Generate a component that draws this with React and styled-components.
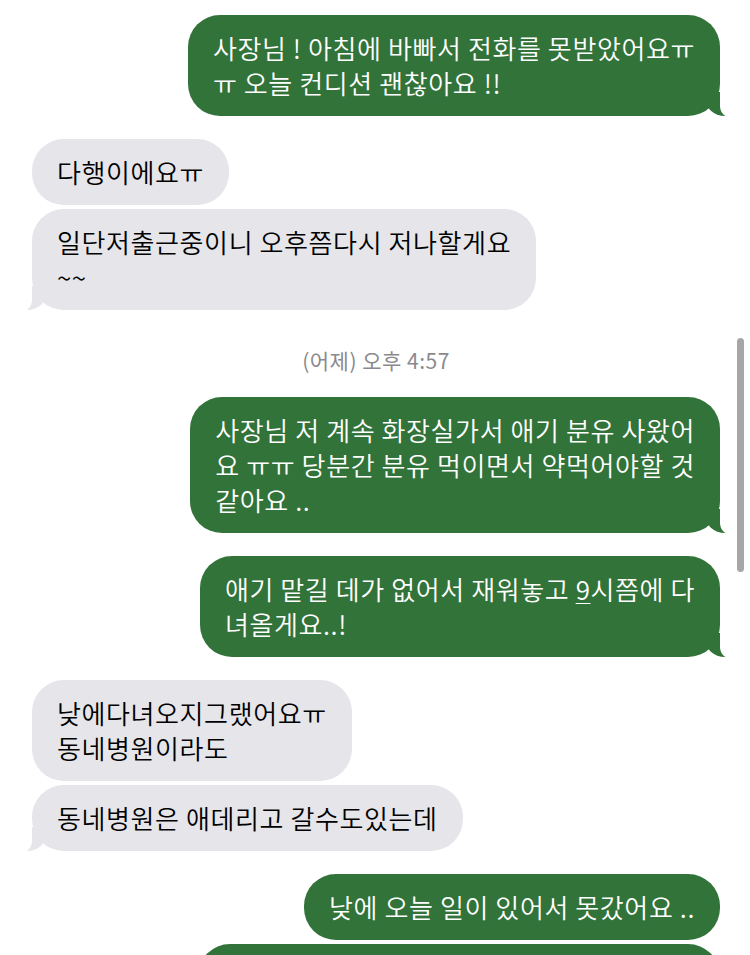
import React from "react";
import styled, { createGlobalStyle, css } from "styled-components";

const GlobalStyle = createGlobalStyle`
  html, body {
    margin: 0;
    padding: 0;
    background: #ffffff;
    height: 955px;
    overflow: hidden;
  }
  * { box-sizing: border-box; }
`;

const GREEN = "#32733a";
const GRAY = "#e5e5ea";

const ThreadUI = styled.div`
  width: 750px;
  height: 955px;
  overflow: hidden;
  display: flex;
  flex-direction: column;
  padding: 15px 30px 0 32px;
  font-family: "Noto Sans CJK KR", "Noto Sans", sans-serif;
  position: relative;
`;

const sentTail = css`
  &::before {
    content: "";
    position: absolute;
    bottom: 0;
    right: -9px;
    height: 24px;
    border-right: 24px solid ${GREEN};
    border-bottom-left-radius: 20px 18px;
  }
  &::after {
    content: "";
    position: absolute;
    bottom: -2px;
    right: -15px;
    width: 15px;
    height: 26px;
    background: #ffffff;
    border-bottom-left-radius: 12px;
  }
`;

const receivedTail = css`
  &::before {
    content: "";
    position: absolute;
    bottom: 0;
    left: -9px;
    height: 24px;
    border-left: 24px solid ${GRAY};
    border-bottom-right-radius: 20px 18px;
  }
  &::after {
    content: "";
    position: absolute;
    bottom: -2px;
    left: -15px;
    width: 15px;
    height: 26px;
    background: #ffffff;
    border-bottom-right-radius: 12px;
  }
`;

const BubbleUI = styled.div`
  position: relative;
  align-self: ${(p) => (p.$me ? "flex-end" : "flex-start")};
  margin-top: ${(p) => (p.$first ? "23px" : "4px")};
  ${(p) => (p.$w ? `width: ${p.$w}px;` : "")}
  padding: 15px 25px 16px;
  border-radius: 32px;
  background: ${(p) => (p.$me ? GREEN : GRAY)};
  color: ${(p) => (p.$me ? "#ffffff" : "#000000")};
  font-size: 26px;
  font-weight: 350;
  letter-spacing: 0.6px;
  line-height: 35px;
  white-space: nowrap;
  ${(p) => p.$tail && (p.$me ? sentTail : receivedTail)}
  &:first-child {
    margin-top: 0;
  }
`;

const LineUI = styled.div`
  position: relative;
  z-index: 1;
`;

const LinkNumUI = styled.span`
  text-decoration: underline;
  text-underline-offset: 3px;
  text-decoration-thickness: 1px;
`;

const StampUI = styled.div`
  align-self: center;
  margin: 37px 0 20px;
  font-size: 21px;
  letter-spacing: 0.5px;
  line-height: 26px;
  color: #8a8a8e;
`;

const ScrollBarUI = styled.div`
  position: absolute;
  right: 6px;
  top: 338px;
  width: 7px;
  height: 234px;
  border-radius: 4px;
  background: #a6a6a6;
`;

const Bubble = ({ me, first, tail, w, lines }) => (
  <BubbleUI $me={me} $first={first} $tail={tail} $w={w}>
    {lines.map((line, i) => (
      <LineUI key={i}>{line}</LineUI>
    ))}
  </BubbleUI>
);

export default function App() {
  return (
    <>
      <GlobalStyle />
      <ThreadUI>
        <Bubble
          me
          tail
          lines={["사장님 ! 아침에 바빠서 전화를 못받았어요ㅠ", "ㅠ 오늘 컨디션 괜찮아요 !!"]}
        />
        <Bubble first lines={["다행이에요ㅠ"]} />
        <Bubble tail lines={["일단저출근중이니 오후쯤다시 저나할게요", "~~"]} />

        <StampUI>(어제) 오후 4:57</StampUI>

        <Bubble
          me
          tail
          lines={[
            "사장님 저 계속 화장실가서 애기 분유 사왔어",
            "요 ㅠㅠ 당분간 분유 먹이면서 약먹어야할 것",
            "같아요 ..",
          ]}
        />
        <Bubble
          me
          first
          tail
          lines={[
            <>
              애기 맡길 데가 없어서 재워놓고 <LinkNumUI>9</LinkNumUI>시쯤에 다
            </>,
            "녀올게요..!",
          ]}
        />
        <Bubble first lines={["낮에다녀오지그랬어요ㅠ", "동네병원이라도"]} />
        <Bubble tail lines={["동네병원은 애데리고 갈수도있는데"]} />
        <Bubble me first lines={["낮에 오늘 일이 있어서 못갔어요 .."]} />
        <Bubble me w={522} lines={["\u00a0", "\u00a0"]} />
        <ScrollBarUI />
      </ThreadUI>
    </>
  );
}
